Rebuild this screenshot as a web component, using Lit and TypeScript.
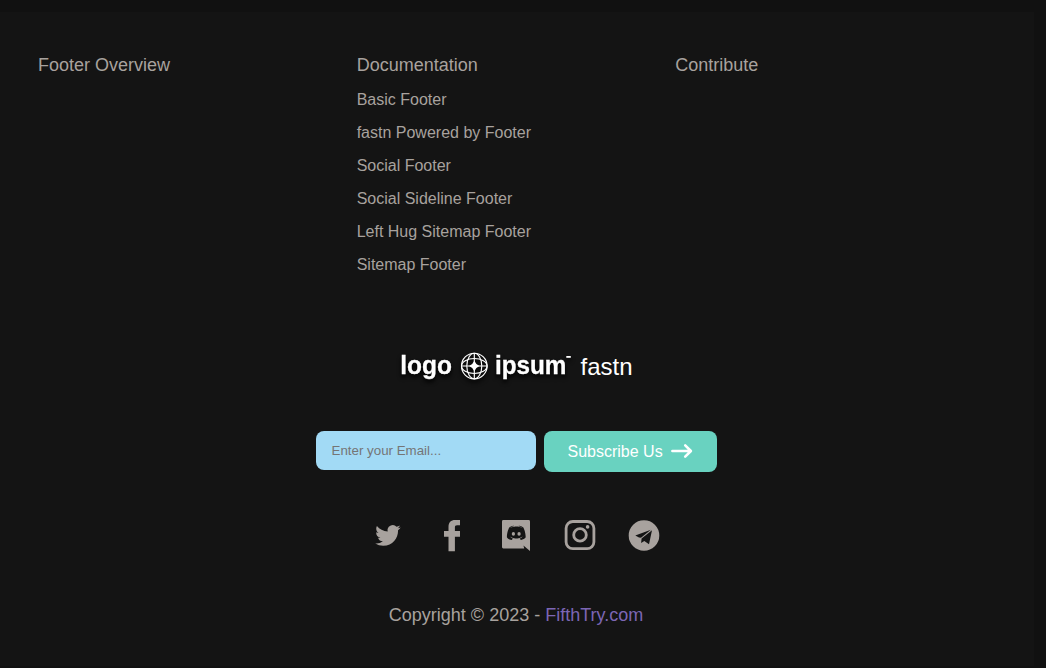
import { LitElement, html, css, svg } from "lit";
import { customElement } from "lit/decorators.js";

const columns = [
  { title: "Footer Overview", links: [] as string[] },
  {
    title: "Documentation",
    links: [
      "Basic Footer",
      "fastn Powered by Footer",
      "Social Footer",
      "Social Sideline Footer",
      "Left Hug Sitemap Footer",
      "Sitemap Footer",
    ],
  },
  { title: "Contribute", links: [] as string[] },
];

const socials = [
  {
    name: "Twitter",
    art: svg`<path transform="translate(3.2 3.1) scale(1.06)" d="M23.953 4.57a10 10 0 01-2.825.775 4.958 4.958 0 002.163-2.723c-.951.555-2.005.959-3.127 1.184a4.92 4.92 0 00-8.384 4.482C7.69 8.095 4.067 6.13 1.64 3.162a4.822 4.822 0 00-.666 2.475c0 1.71.87 3.213 2.188 4.096a4.904 4.904 0 01-2.228-.616v.06a4.923 4.923 0 003.946 4.827 4.996 4.996 0 01-2.212.085 4.936 4.936 0 004.604 3.417 9.867 9.867 0 01-6.102 2.105c-.39 0-.779-.023-1.17-.067a13.995 13.995 0 007.557 2.209c9.053 0 13.998-7.496 13.998-13.985 0-.21 0-.42-.015-.63A9.935 9.935 0 0024 4.59z"/>`,
  },
  {
    name: "Facebook",
    art: svg`<path d="M12.500 31.600V17.200H8V11.300h4.500V7.400C12.500 2.800 14.800.5 19.200.5H24v5.200h-2.900c-1.700 0-2.200.8-2.200 2.300v3.300H24V17.200h-5.100v14.400z"/>`,
  },
  {
    name: "Discord",
    art: svg`<path d="M3.300.5h25.400A1.300 1.300 0 0130 1.800v29.700L23.400 25.800l.9 3H3.300A1.300 1.300 0 012 27.500V1.800A1.300 1.300 0 013.300.5z"/><g transform="translate(16.200 13.800) scale(.161 .168) translate(-122.500 -109)"><path class="cut" d="M150.900 147.600s-3.600-4.300-6.600-8.100c13.100-3.700 18.100-11.900 18.100-11.900-4.100 2.700-8 4.600-11.500 5.900-5 2.100-9.800 3.500-14.500 4.300-9.600 1.800-18.400 1.300-25.900-.1-5.700-1.100-10.600-2.700-14.700-4.300-2.300-.9-4.800-2-7.300-3.400l-4.100-2.500s4.800 8 17.500 11.800c-3 3.800-6.700 8.300-6.700 8.300-22.100-.7-30.500-15.200-30.500-15.200 0-32.200 14.400-58.300 14.400-58.300 14.400-10.800 28.100-10.500 28.100-10.500l1 1.200c-18 5.200-26.300 13.100-26.300 13.100s2.200-1.200 5.900-2.900c10.700-4.700 19.200-6 22.700-6.300 7.900-1 15.700-1.100 21.900-.4 9.500 1.100 19.700 3.900 30.100 9.600 0 0-7.900-7.500-24.900-12.700l1.400-1.600s13.700-.3 28.100 10.500c0 0 14.400 26.100 14.400 58.300 0 0-8.500 14.500-30.600 15.200z"/><ellipse cx="105" cy="112" rx="10.200" ry="10.600"/><ellipse cx="140.300" cy="112" rx="10.200" ry="10.600"/></g>`,
  },
  {
    name: "Instagram",
    art: svg`<g fill="none" stroke="currentColor" stroke-width="2.800"><rect x="2.100" y="1.900" width="27.800" height="27.200" rx="6.800"/><circle cx="16" cy="15.300" r="6.300"/></g><circle cx="23.600" cy="7.300" r="1.800"/>`,
  },
  {
    name: "Telegram",
    art: svg`<path fill-rule="evenodd" d="M16 .6a15.300 15.300 0 100 30.600A15.300 15.300 0 0016 .6zM22.900 10.200L7.300 15.800 11 18l2 .1zM24 10.600L13.600 18.900 13.100 23.400 16.300 21.400 21 24.600z"/>`,
  },
];

@customElement("app-root")
export class AppRoot extends LitElement {
  static styles = css`
    :host {
      display: block;
      height: 668px;
      overflow: hidden;
      box-sizing: border-box;
      padding: 12px 12px 2px 0;
      background: #111111;
      color: #a8a29e;
      font-family: "Liberation Sans", Arial, sans-serif;
    }
    .footer {
      display: flex;
      flex-direction: column;
      align-items: center;
      height: 654px;
      box-sizing: border-box;
      padding: 42px 40px 0 38px;
      background: #141414;
    }
    .sitemap {
      display: grid;
      grid-template-columns: repeat(3, 1fr);
      width: 100%;
      height: 246px;
    }
    .column {
      display: flex;
      flex-direction: column;
    }
    .heading {
      font-size: 18px;
      line-height: 22px;
      margin-bottom: 7px;
    }
    .link {
      font-size: 16px;
      line-height: 33px;
    }
    .brand {
      display: flex;
      align-items: center;
      height: 36px;
      margin-top: 48px;
      color: #fff;
    }
    .logo {
      display: block;
      filter: drop-shadow(0 3px 2px #000);
    }
    .logo-text {
      font: bold 25.5px "Liberation Sans", Arial, sans-serif;
    }
    .brand-name {
      font-size: 24px;
      line-height: 28px;
      padding-top: 2px;
      margin-left: 8px;
    }
    .form {
      display: flex;
      align-items: flex-start;
      gap: 8px;
      margin-top: 46.5px;
    }
    .email {
      box-sizing: border-box;
      width: 220px;
      height: 39.5px;
      padding: 0 16px;
      border: 0;
      border-radius: 8px;
      background: #a2daf5;
      font: 13.333px "Liberation Sans", Arial, sans-serif;
    }
    .email::placeholder {
      color: #757575;
    }
    .subscribe {
      display: flex;
      align-items: center;
      gap: 8px;
      box-sizing: border-box;
      width: 173px;
      height: 41px;
      padding: 1px 24px 0;
      border: 0;
      border-radius: 8px;
      background: #69d2c0;
      color: #fff;
      font: 16px "Liberation Sans", Arial, sans-serif;
      white-space: nowrap;
    }
    .arrow {
      flex: none;
    }
    .socials {
      display: flex;
      gap: 32px;
      margin-top: 47.5px;
    }
    .social {
      display: block;
      fill: currentColor;
    }
    .cut {
      fill: #141414;
    }
    .copyright {
      margin-top: 51.5px;
      font-size: 18px;
      line-height: 22px;
    }
    .maker {
      color: #7c66b4;
    }
  `;

  render() {
    return html`
      <footer class="footer">
        <nav class="sitemap">
          ${columns.map(
            (c) => html`<div class="column">
              <div class="heading">${c.title}</div>
              ${c.links.map((l) => html`<div class="link">${l}</div>`)}
            </div>`
          )}
        </nav>
        <div class="brand">
          <svg class="logo" width="173" height="36" viewBox="0 0 173 36">
            <g class="logo-text" fill="#fff" stroke="#fff" stroke-width="0.300">
              <text x="1.300" y="25.800" textLength="51.800" lengthAdjust="spacingAndGlyphs">logo</text>
              <text x="95.900" y="25.800" textLength="71.500" lengthAdjust="spacingAndGlyphs">ipsum</text>
            </g>
            <g fill="none" stroke="#fff" stroke-width="1.150">
              <circle cx="75.300" cy="18" r="12.800" />
              <ellipse cx="75.300" cy="18" rx="7.500" ry="12.800" />
              <ellipse cx="75.300" cy="18" rx="12.800" ry="7.500" />
              <path d="M75.300 5v26M62.500 18h25.600" />
            </g>
            <path fill="#fff" d="M75.300 12.800L77.400 15.900 80.500 18 77.400 20.100 75.300 23.200 73.200 20.100 70.100 18 73.200 15.900z" />
            <path fill="#fff" d="M167.300 8h4.500v1.800h-4.500z" />
          </svg>
          <span class="brand-name">fastn</span>
        </div>
        <div class="form">
          <input class="email" type="email" placeholder="Enter your Email..." />
          <button class="subscribe">
            Subscribe Us
            <svg class="arrow" width="24" height="24" viewBox="0 0 24 24" fill="none" stroke="#fff" stroke-width="2.600" stroke-linecap="round" stroke-linejoin="round">
              <path d="M1.400 11h18.300M14.200 5.400L19.900 11l-5.700 5.600" />
            </svg>
          </button>
        </div>
        <div class="socials">
          ${socials.map(
            (s) => html`<svg class="social" width="32" height="33" viewBox="0 -0.6 32 33" aria-label=${s.name}>${s.art}</svg>`
          )}
        </div>
        <div class="copyright">Copyright © 2023 - <span class="maker">FifthTry.com</span></div>
      </footer>
    `;
  }
}
